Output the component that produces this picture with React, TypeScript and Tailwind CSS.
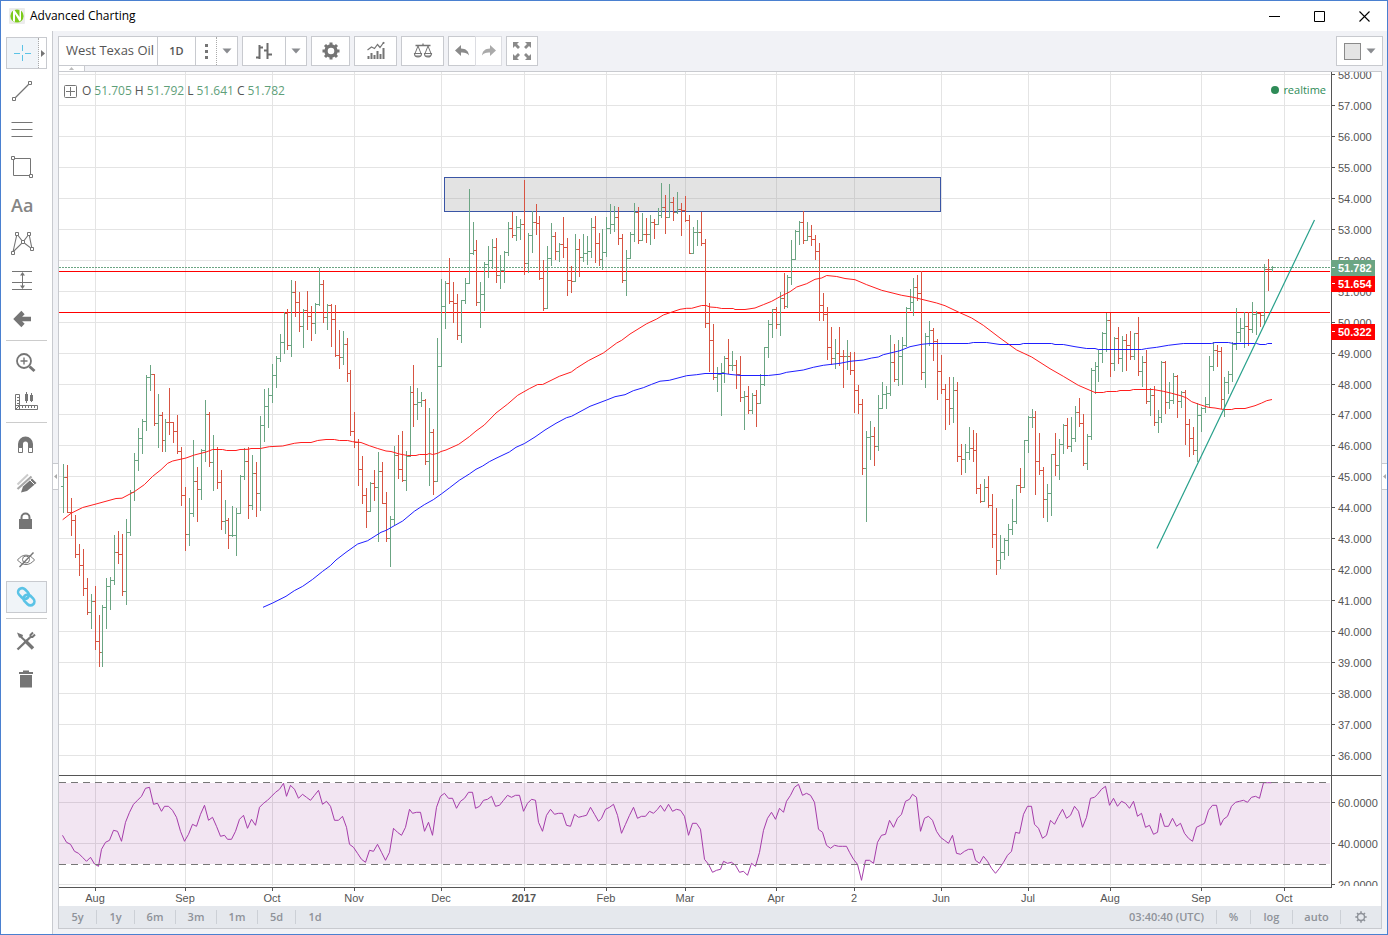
import type { ReactNode } from "react";

/* ---------- chart data ---------- */

// Each block holds "high,low,close" triples in thirds of a pixel below `top`.
const BLOCKS: { top: number; rows: string }[] = [
  {
    top: 340,
    rows: "372,518,412 376,517,517 475,587,541 526,653,643 613,707,676 628,767,745 715,824,817 763,866,784 739,929,904 826,980,937 796,980,802 715,866,739 712,808,721 586,734,637 574,671,643 583,767,754 538,794,577 451,587,457 340,482,361 265,392,295 238,341,244 106,272,112 76,152,103 103,257,250 163,323,226 217,335,301 238,335,247 145,284,248 247,308,274 226,341,334 322,497,466 442,632,583 475,617,520 301,530,424 382,545,448 328,479,331 181,365,223 217,380,367 286,452,328 322,446,427 391,569,544 481,581,541 535,626,587 499,590,586 505,647,520 406,520,409 325,419,364 322,536,496 346,509,400 367,530,460 229,512,256 148,305,199 145,263,166 73,188,106 49,143,55",
  },
  {
    top: 240,
    rows: "283,365,307 217,341,220 208,329,316 121,350,157 124,230,187 157,275,259 208,323,211 154,269,229 199,302,250 190,281,193 85,197,133 121,248,232 193,269,196 193,320,238 196,350,346 271,386,352 274,374,313 295,425,400 391,587,574 517,623,607 598,737,688 649,791,766 745,863,814 727,814,730 691,782,742 637,905,694 667,790,790 757,905,895 829,980,838 619,856,646 586,716,688 574,725,721 634,752,649 439,649,457 376,560,493 445,539,487 457,500,481 478,674,664 505,737,577 568,764,724 295,724,379 118,380,199 124,266,130 55,191,184 127,248,190 163,299,286 181,308,181 115,191,130",
  },
  {
    top: 160,
    rows: "88,370,280 187,284,271 241,437,427 367,503,403 307,452,313 259,353,301 238,326,262 235,368,346 286,386,331 274,368,277 187,287,205 157,233,226 169,242,202 178,239,193 61,344,310 220,338,226 154,278,187 133,224,190 169,359,355 301,452,445 259,445,295 190,317,229 217,299,274 250,305,253 172,293,262 235,407,361 319,398,364 223,364,268 238,350,292 223,305,280 229,314,274 175,293,202 169,308,250 220,317,298 208,329,277 172,290,205 133,221,193 139,215,172 142,254,235 223,368,361 271,407,295 217,296,223 130,245,157 142,251,241 160,242,223 175,248,224 166,254,187 178,236,193 145,194,166 70,173,142 106,221,172 73,173,127 112,182,157 97,161,148 130,227,151 109,185,181 166,280,280 202,281,218 181,257,217 157,257,250",
  },
  {
    top: 200,
    rows: "118,383,370 310,515,421 373,539,532 502,575,523 490,647,517 469,548,475 418,521,497 454,512,496 481,566,523 469,605,592 574,689,589 559,641,631 580,641,586 571,680,610 523,610,553 442,557,442 361,473,373 328,413,328 322,386,373 277,407,295 220,326,319 226,322,232 121,254,178 91,179,94 64,134,67 34,131,121 67,122,109 76,137,118 106,179,154 130,362,316 280,362,343 322,479,442 382,494,475 418,506,460 382,497,469 451,563,470 421,509,469 457,524,511 457,638,571 556,641,613 598,824,805 694,965,712 664,779,709 682,797,739 586,752,625 547,626,583 559,626,580 406,587,487 433,545,538 421,557,469 412,554,436 322,440,325 268,332,307 235,347,262 226,302,280 214,539,517 400,563,409 364,437,391 385,482,424 418,599,514 466,581,568 553,689,598 532,674,625 532,668,571 547,785,769 733,824,778 733,818,757 682,779,745 691,785,751 700,881,865 853,908,904 838,904,862 829,923,916 883,1043,1003 925,1124,1081 1006,1106,1057 1015,1079,1021 973,1067,988 898,1004,964 856,971,856 805,878,862",
  },
  {
    top: 240,
    rows: "601,742,601 529,638,533 508,563,532 514,764,664 580,704,691 682,833,778 733,845,760 643,827,643 580,707,676 598,719,613 553,641,556 535,626,619 532,635,595 499,605,517 475,560,550 523,677,670 583,689,589 385,599,391 367,461,379 331,425,340 277,368,280 220,335,241 220,410,370 292,392,295 262,371,355 289,395,301 283,392,316 274,359,349 280,358,280 232,407,394 349,440,367 331,490,484 445,527,466 439,557,547 511,578,532 364,548,367 364,521,487 427,506,481 400,491,409 406,533,484 454,503,457 451,614,553 538,650,595 562,644,631 490,665,526 502,575,505 472,518,493 349,502,379 307,392,331 316,380,334 322,506,478 412,530,427 394,461,403 307,425,313 205,329,277 235,305,265 217,323,259 217,317,268 187,278,223 214,284,220 220,260,226 73,250,88 58,152,89 79,94,82",
  },
];

const RSI =
  "226 247 253 274 280 292 304 292 312 319 268 247 241 211 214 244 187 157 133 121 109 85 82 133 130 154 139 139 151 172 214 244 223 193 199 163 136 181 172 199 229 226 238 238 214 178 166 205 178 196 142 130 121 109 97 88 70 109 76 88 115 103 112 121 106 91 133 124 139 181 181 169 202 253 262 280 298 307 271 274 253 277 301 277 205 217 226 202 148 160 157 157 214 187 226 142 109 100 115 115 145 124 115 97 97 145 139 121 118 109 139 136 121 106 112 106 106 154 130 118 121 187 214 166 148 163 160 160 196 199 163 172 169 166 142 163 184 175 148 142 133 166 220 193 166 142 175 169 169 154 160 148 136 154 133 154 148 151 169 226 190 190 208 298 313 337 331 328 304 310 307 316 337 334 346 310 319 277 211 175 157 178 145 157 124 106 82 73 106 100 106 127 208 217 256 265 256 259 259 259 277 298 313 361 301 301 310 247 226 223 181 202 175 163 124 118 103 112 214 175 169 181 214 232 241 250 226 280 283 274 268 268 301 310 289 304 325 340 325 307 286 274 217 220 163 139 139 193 205 235 226 181 193 169 148 175 166 139 154 202 172 115 112 103 88 79 136 115 139 124 130 145 124 169 160 202 196 223 217 160 199 199 175 199 190 220 235 244 202 196 190 151 136 136 196 178 169 139 127 124 121 127 112 109 115 68 68 68";

const SLOW_MA =
  "263,607.3 272.7,603 286,596.3 294.3,590.7 302.7,586.3 312.7,579.3 322.7,571.3 330.3,565.7 336,560 346,552.3 357.7,544 367.7,540.7 381,532.3 386.3,530.3 394.3,525.7 402.7,521 414.3,511.3 424.3,504.7 433.3,499.7 441.3,494 449.3,488 459.3,480.3 469.3,474 476,469.3 482.7,466 489.3,461.7 496,458.3 509.3,452 516,447.3 524.5,443.5 535,437 545,430 556,423.3 566.5,417.7 571.5,416.3 590,406.3 606.7,400 615,396.7 625,394.7 633.3,390.7 643.3,387.7 651.7,384.3 660,381.2 669.3,380.3 686.7,375.7 696.7,374.7 705,373.5 724,373.5 731,374.5 741,375.5 768.3,375.5 780,374.2 786.7,372.3 803.3,370 813.3,367.3 823.3,365.3 840,363.3 850,361.3 863.3,360 871.7,358 878.3,357 883.3,354.7 900,350.7 910,346.7 921.7,344.3 930,343.5 950,343.5 968.3,343.5 973.3,342.5 986.7,342.5 1000,344.5 1020,344.5 1023.3,343.5 1051.7,343.5 1055,344.5 1063.3,344.5 1075,346.7 1086.7,348.5 1095,348.5 1098.3,349.5 1141.7,349.5 1146.7,348.5 1156.7,347.3 1168.3,345.3 1183.3,343.5 1211.7,343.5 1215,342.5 1228.3,342.5 1233.3,343.5 1256.7,343.5 1260,344.5 1265.7,344.5 1267.7,343.5 1272,343.5";

const FAST_MA =
  "62.7,519.7 71,513.3 82.7,507.5 96,504 116,498.5 122,498.2 134.3,491.7 144.3,484.7 152.7,476.3 161,469.7 167.7,463.3 172.7,461 186,458 194.3,455 206,452 212.7,449.5 222.7,449.5 226.7,450.5 236,450.5 240,449.5 248.3,449.3 251,448.5 260.3,448.5 269.3,446.7 282.7,446 294.3,443.3 301,442.5 311,442.5 317.7,440.5 326,439.5 334.3,439.5 339.3,440.5 347.7,440.5 352.7,441.7 361,442.5 369.3,445.7 377.7,448.5 386,451 391,451.5 399.3,454 407.7,455.5 416,455.5 419.3,454.5 427,454.5 429.3,453.5 432.7,454.5 437.7,453.3 441,451.5 446,450 458.7,444.3 469.3,436.7 476,431 484.3,425 496,413 507.7,404 517.7,395.3 529.3,388.7 537.7,384.5 542.7,384.5 559.3,376.3 571.3,372 576.7,368 588.3,360.7 603.3,353 616.7,343 621.7,340.3 630,334 646.7,323.7 656.7,319 663.3,315 670,312.7 680,309.3 686.7,308.3 691.7,308.3 701.7,305.5 706,305.5 710,307 716.7,307.5 721.7,308.5 733.3,308.5 735,309.5 745,309.5 755,308 763.3,304.7 771.7,301.3 780,296.7 790,291.7 796.7,287 806.7,283.7 815,279.3 821.7,278 826.7,275.5 836.7,276.5 845,278.5 855,279.7 866.7,284.7 881.7,290.3 901.7,295.3 913.3,297.3 921.7,299.3 936.7,303 945,305.7 958.3,312 971.7,318 983.3,325.3 1000,338 1016.7,350 1031.7,357 1050,368.7 1063.3,376.3 1078.3,385.3 1095,392.5 1103.3,392.5 1106.7,391.5 1116.7,391.5 1120,390.5 1130,390.5 1133.3,389.5 1153.3,389.5 1163.3,391.3 1171.7,393.3 1181.7,396 1186.7,398 1191.7,401.7 1200,404.7 1208.3,407.3 1215,408 1223.3,409.5 1231.7,409.5 1235,408.5 1245,408.5 1255,405.7 1261.7,403 1266.7,400.7 1272,399.5";

const MONTHS: [number, string][] = [
  [95, "Aug"],
  [185, "Sep"],
  [272, "Oct"],
  [354, "Nov"],
  [441, "Dec"],
  [524, "2017"],
  [606, "Feb"],
  [685, "Mar"],
  [776, "Apr"],
  [854, "2"],
  [941, "Jun"],
  [1028, "Jul"],
  [1110, "Aug"],
  [1201, "Sep"],
  [1284, "Oct"],
];

const PRICES = Array.from({ length: 23 }, (_, i) => ({
  label: `${58 - i}.000`,
  y: i < 11 ? 74 + i * 31 : 414 + (i - 11) * 31,
}));

const barX = (i: number) => 63 + Math.floor(0.6 + i * 3.9368);

function buildBars() {
  let up = "";
  let down = "";
  let open = 340 + 439 / 3;
  let i = 0;
  for (const block of BLOCKS) {
    for (const row of block.rows.split(" ")) {
      const [high, low, close] = row.split(",").map((v) => block.top + Number(v) / 3);
      const x = barX(i);
      const top = Math.floor(high);
      const height = Math.floor(low) + 1 - top;
      const d =
        `M${x} ${top}h1v${height}h-1z` +
        `M${x - 2} ${Math.floor(open)}h2v1h-2z` +
        `M${x + 1} ${Math.floor(close)}h1v1h-1z`;
      if (close < open) up += d;
      else down += d;
      open = close;
      i += 1;
    }
  }
  return { up, down };
}

const BARS = buildBars();
const RSI_POINTS = RSI.split(" ")
  .map((v, i) => `${barX(i) - 0.5},${(760 + Number(v) / 3).toFixed(1)}`)
  .join(" ");

/* ---------- chart ---------- */

function PriceTag({ y, label, color }: { y: number; label: string; color: string }) {
  return (
    <g>
      <rect x="1331" y={y} width="44" height="16" fill={color} />
      <rect x="1332" y={y + 7} width="3" height="1" fill="#fff" />
      <text x="1338" y={y + 12} fill="#fff" fontWeight="700">
        {label}
      </text>
    </g>
  );
}

function Chart() {
  return (
    <svg
      viewBox="59 72 1322 834"
      className="block w-full bg-white font-['Liberation_Sans',Arial,sans-serif] text-[11px]"
      role="img"
      aria-label="West Texas Oil daily price chart"
    >
      <defs>
        <clipPath id="rsi-axis">
          <rect x="1331" y="776" width="50" height="110" />
        </clipPath>
      </defs>
      <g fill="#e4e4e4" shapeRendering="crispEdges">
        {PRICES.map((p) => (
          <rect key={p.y} x="59" y={p.y} width="1271" height="1" />
        ))}
        {[802, 843, 884].map((y) => (
          <rect key={y} x="59" y={y} width="1271" height="1" />
        ))}
        {MONTHS.map(([x]) => (
          <rect key={x} x={x} y="72" width="1" height="814" />
        ))}
      </g>
      <g shapeRendering="crispEdges">
        <rect x="59" y="783" width="1271" height="81" fill="#800080" fillOpacity="0.1" />
        <rect x="444.5" y="177.5" width="496" height="34" fill="#999" fillOpacity="0.27" stroke="#3a55a5" />
        <path d="M59 271.5H1330M59 312.5H1330" stroke="#f00" />
        <path d="M59 267.5H1330" stroke="#6ba583" strokeDasharray="2 1" />
        <path d={BARS.up} fill="#6ba583" />
        <path d={BARS.down} fill="#d75442" />
      </g>
      <g fill="none" strokeWidth="1">
        <polyline points={FAST_MA} stroke="#ff1f1f" />
        <polyline points={SLOW_MA} stroke="#1f1fff" />
        <path d="M1157 548.5L1314.5 220" stroke="#26a08a" strokeWidth="1.2" />
        <polyline points={RSI_POINTS} stroke="#a53caa" />
      </g>
      <path
        d="M59 782.5H1330M59 864.5H1330"
        stroke="#777"
        strokeDasharray="7 5"
        shapeRendering="crispEdges"
      />
      <g fill="#555" shapeRendering="crispEdges">
        <rect x="59" y="775" width="1322" height="1" />
        <rect x="59" y="887" width="1273" height="1" />
        <rect x="1331" y="72" width="1" height="816" />
        {PRICES.map((p) => (
          <rect key={p.y} x="1332" y={p.y} width="3" height="1" />
        ))}
        {[802, 843, 884].map((y) => (
          <rect key={y} x="1332" y={y} width="3" height="1" />
        ))}
        {MONTHS.map(([x]) => (
          <rect key={x} x={x} y="888" width="1" height="3" />
        ))}
      </g>
      <g fill="#555">
        {PRICES.map((p) => (
          <text key={p.y} x="1338" y={p.y + 5}>
            {p.label}
          </text>
        ))}
        <g clipPath="url(#rsi-axis)">
          <text x="1338" y="807">60.0000</text>
          <text x="1338" y="848">40.0000</text>
          <text x="1338" y="889">20.0000</text>
        </g>
        {MONTHS.map(([x, label]) => (
          <text key={x} x={x} y="902" textAnchor="middle" fontWeight={label === "2017" ? 700 : 400}>
            {label}
          </text>
        ))}
      </g>
      <PriceTag y={260} label="51.782" color="#6ba583" />
      <PriceTag y={276} label="51.654" color="#ff0000" />
      <PriceTag y={324} label="50.322" color="#ff0000" />
    </svg>
  );
}

/* ---------- icons ---------- */

function Icon({ size = 28, className = "", children }: { size?: number; className?: string; children: ReactNode }) {
  return (
    <svg
      width={size}
      height={size}
      viewBox={`0 0 ${size} ${size}`}
      className={`block shrink-0 ${className}`}
      fill="none"
      stroke="#757575"
      aria-hidden="true"
    >
      {children}
    </svg>
  );
}

const Caret = () => (
  <svg width="10" height="6" viewBox="0 0 10 6" className="block" aria-hidden="true">
    <path d="M0.5 0.5h9L5 5.5z" fill="#8a8c90" />
  </svg>
);

const CrossIcon = () => (
  <Icon>
    <path d="M13.5 6v6M13.5 16v6M5 14.5h6M16 14.5h6" stroke="#5bc3e6" />
  </Icon>
);
const TrendIcon = () => (
  <Icon>
    <path d="M7 21L21 7" strokeWidth="1.2" />
    <path d="M4.5 20.5h3v3h-3zM20.5 4.5h3v3h-3z" fill="#fff" />
  </Icon>
);
const LinesIcon = () => (
  <Icon>
    <path d="M3.5 7.5h21M3.5 14.5h21M3.5 21.5h21" />
  </Icon>
);
const RectIcon = () => (
  <Icon>
    <path d="M5.5 5.5h17v17h-17z" />
    <path d="M3.5 3.5h3v3h-3zM21.5 21.5h3v3h-3z" fill="#fff" />
  </Icon>
);
const PatternIcon = () => (
  <Icon>
    <path d="M5 23L9 5l6 8 6-8 3 15-9-7z" strokeWidth="1.1" />
    <path d="M3.5 22.5h3v3h-3zM7.5 3.5h3v3h-3zM13.5 11.5h3v3h-3zM19.5 3.5h3v3h-3zM22.5 18.5h3v3h-3z" fill="#fff" />
  </Icon>
);
const RangeIcon = () => (
  <Icon>
    <path d="M4 4.5h20M4 15.5h20M4 22.500h20M14.500 6v15" />
    <path d="M14.500 5l2.500 3.500h-5zM14.500 22l2.500-3.500h-5z" fill="#757575" stroke="none" />
  </Icon>
);
const BackIcon = () => (
  <Icon>
    <path d="M15 7.500L8.500 14l6.500 6.500M9.500 14H23" strokeWidth="4.600" />
  </Icon>
);
const ZoomIcon = () => (
  <Icon>
    <circle cx="12" cy="12" r="7" strokeWidth="1.800" />
    <path d="M12 8.500v7M8.500 12h7" strokeWidth="1.400" />
    <path d="M17.500 17.500l5 4.500" strokeWidth="3" />
  </Icon>
);
const MeasureIcon = () => (
  <Icon>
    <path d="M3.500 7.500h4v15h-4zM3.500 18.500h22v4h-22zM3.500 22.500l4-4" />
    <path d="M5 10.500h2M5 13.500h2M5 16.500h2M10.500 19v2M13.500 19v2M16.500 19v2M19.500 19v2M22.500 19v2M14.500 5v11M19.500 6v9" />
    <path d="M13 7h3v7h-3zM18 8h3v6h-3z" fill="#757575" stroke="none" />
  </Icon>
);
const MagnetIcon = () => (
  <Icon>
    <path d="M8.500 17v-4a5 5 0 0 1 10 0v4" strokeWidth="5" />
    <path d="M6.500 16.500h4v5h-4zM16.500 16.500h4v5h-4z" fill="#fff" />
  </Icon>
);
const PencilsIcon = () => (
  <Icon>
    <path d="M5.500 15.500L16 5.500" stroke="#ccc" strokeWidth="2" />
    <path d="M5.500 20L19.500 7.500" stroke="#a8a8a8" strokeWidth="2.200" />
    <path d="M9 23.500l2-6 9-8 4.500 4.500-9.500 8z" fill="#757575" stroke="none" />
    <path d="M18 11l4.500 4.500" stroke="#fff" />
  </Icon>
);
const LockIcon = () => (
  <Icon>
    <path d="M9.500 13v-2.500a4 4 0 0 1 8 0V13" strokeWidth="2" />
    <path d="M7 12h13v10H7z" fill="#757575" stroke="none" />
  </Icon>
);
const EyeIcon = () => (
  <Icon>
    <path d="M5.500 15c5-6.500 12-6.500 17 0-5 6-12 6-17 0z" />
    <circle cx="14" cy="14.500" r="3.500" />
    <path d="M21.500 7.500L7.500 22" strokeWidth="1.400" />
  </Icon>
);
const LinkIcon = () => (
  <Icon>
    <g stroke="#5bc3e6" strokeWidth="2.600">
      <rect x="-4" y="-6" width="8" height="12" rx="4" transform="translate(10.500 10.500) rotate(-45)" />
      <rect x="-4" y="-6" width="8" height="12" rx="4" transform="translate(16 17) rotate(-45)" />
    </g>
  </Icon>
);
const ToolsIcon = () => (
  <Icon>
    <path d="M5.500 22.500L18 10.500" strokeWidth="2.400" />
    <path d="M21 5.500l-2.500 2.500v2h2l2.500-2.500" strokeWidth="2" />
    <path d="M9 10l4.500 4" strokeWidth="2" />
    <path d="M13 13.500l8 8" strokeWidth="3.400" />
    <path d="M5 5.500l6 2.500-1 3-3-.5z" fill="#757575" stroke="none" />
  </Icon>
);
const TrashIcon = () => (
  <Icon>
    <path d="M8 10h12v12.500H8zM7 7h4V5.500h6V7h4v2H7z" fill="#757575" stroke="none" />
  </Icon>
);

const BarsIcon = () => (
  <Icon size={20}>
    <path d="M5.500 4v14M2 16.500h3M6 6.500h3M13.500 2v16M10 9.500h3M14 13.500h4" strokeWidth="2" stroke="#6c6c6c" />
  </Icon>
);
const GearIcon = () => (
  <Icon size={20}>
    <circle cx="10" cy="10" r="5" strokeWidth="3.400" />
    <path
      d="M10 1.500v3M10 15.500v3M1.500 10h3M15.500 10h3M4 4l2 2M14 14l2 2M16 4l-2 2M4 16l2-2"
      strokeWidth="3"
    />
  </Icon>
);
const IndicatorIcon = () => (
  <Icon size={20}>
    <path d="M1.500 9l4-3 3 1.500 3-4 2.500 3 4-5.500" strokeWidth="1.200" />
    <path d="M2.500 18v-3M5.500 18v-6M8.500 18v-4M11.500 18v-8M14.500 18v-5M17.500 18V7" strokeWidth="2" />
    <circle cx="17.500" cy="2" r="1" fill="#757575" stroke="none" />
  </Icon>
);
const ScalesIcon = () => (
  <Icon size={20}>
    <path d="M2.500 4.500h15M10 2.500v2" strokeWidth="1.300" />
    <path d="M5 5L2 12.500M5 5l3 7.500M15 5l-3 7.500M15 5l3 7.500" />
    <path d="M1.500 12.500h7a3.500 3.500 0 0 1-7 0zM11.500 12.500h7a3.500 3.500 0 0 1-7 0z" strokeWidth="1.200" />
    <path d="M2.500 14.500h5l-1 1.200h-3zM12.500 14.500h5l-1 1.200h-3z" fill="#757575" stroke="none" />
  </Icon>
);
const UndoIcon = ({ color }: { color: string }) => (
  <svg width="14" height="12" viewBox="0 0 14 12" aria-hidden="true">
    <path d="M0 5.500L6 0v3.500c5 .2 7.500 2.500 8 7-2-2.500-4-3.200-8-3V11z" fill={color} />
  </svg>
);
const ExpandIcon = () => (
  <Icon size={20}>
    <path
      d="M1 1h6L5 3l3 3-2 2-3-3-2 2zM19 1h-6l2 2-3 3 2 2 3-3 2 2zM1 19h6l-2-2 3-3-2-2-3 3-2-2zM19 19h-6l2-2-3-3 2-2 3 3 2-2z"
      fill="#8a8a8a"
      stroke="none"
    />
  </Icon>
);

/* ---------- sidebar ---------- */

function Tool({ label, shift = false, children }: { label: string; shift?: boolean; children: ReactNode }) {
  return (
    <button
      type="button"
      aria-label={label}
      className={`flex h-[38px] w-full items-center ${shift ? "pl-[11px]" : "pl-[7px]"}`}
    >
      {children}
    </button>
  );
}

const Divider = () => <div className="mt-[2px] mr-[5px] mb-[3px] ml-[5px] h-px bg-[#ccc]" />;

function Sidebar() {
  return (
    <nav aria-label="Drawing tools" className="w-[52px] shrink-0 border-r border-[#c8cacf] bg-white pt-[3px]">
      <div className="flex h-[38px] items-center pl-[5px]">
        <div className="flex h-8 w-[41px] border border-[#c8cacf]">
          <button
            type="button"
            aria-label="Cross"
            className="flex w-8 shrink-0 items-center justify-center border-r border-dotted border-[#aaa] bg-[#f0f4f8]"
          >
            <CrossIcon />
          </button>
          <button type="button" aria-label="Cursor menu" className="flex flex-1 items-center justify-center">
            <svg width="4" height="7" viewBox="0 0 4 7" aria-hidden="true">
              <path d="M0 0l4 3.500L0 7z" fill="#757575" />
            </svg>
          </button>
        </div>
      </div>
      <Tool label="Trend line"><TrendIcon /></Tool>
      <Tool label="Channels"><LinesIcon /></Tool>
      <Tool label="Shapes"><RectIcon /></Tool>
      <button
        type="button"
        className="flex h-[38px] w-full items-center pl-[10px] font-['Open_Sans',sans-serif] text-[18px] font-semibold text-[#858585]"
      >
        Aa
      </button>
      <Tool label="Patterns"><PatternIcon /></Tool>
      <Tool label="Range"><RangeIcon /></Tool>
      <Tool label="Back"><BackIcon /></Tool>
      <Divider />
      <Tool label="Zoom in" shift><ZoomIcon /></Tool>
      <Tool label="Measure" shift><MeasureIcon /></Tool>
      <Divider />
      <Tool label="Magnet" shift><MagnetIcon /></Tool>
      <Tool label="Drawing mode" shift><PencilsIcon /></Tool>
      <Tool label="Lock drawings" shift><LockIcon /></Tool>
      <Tool label="Hide drawings" shift><EyeIcon /></Tool>
      <div className="flex h-[38px] items-center pl-[5px]">
        <button
          type="button"
          aria-label="Link"
          className="flex h-8 w-[41px] items-center justify-center border border-[#c8cacf] bg-[#f0f4f8]"
        >
          <LinkIcon />
        </button>
      </div>
      <Divider />
      <Tool label="Tools" shift><ToolsIcon /></Tool>
      <Tool label="Remove" shift><TrashIcon /></Tool>
    </nav>
  );
}

/* ---------- toolbar ---------- */

function ToolBox({ className, label, children }: { className: string; label: string; children: ReactNode }) {
  return (
    <button
      type="button"
      aria-label={label}
      className={`flex items-center justify-center border border-[#c8cacf] bg-white ${className}`}
    >
      {children}
    </button>
  );
}

function Toolbar() {
  return (
    <div className="flex h-[30px] gap-1 text-[#555]">
      <div className="flex w-[180px] border border-[#c8cacf] bg-white">
        <button type="button" className="w-[99px] border-r border-[#c8cacf] pl-1 text-[13px] font-medium whitespace-nowrap">
          West Texas Oil
        </button>
        <button type="button" className="w-[38px] border-r border-[#c8cacf] text-[11px] font-semibold">
          1D
        </button>
        <button
          type="button"
          aria-label="Intervals"
          className="flex w-[21px] flex-col items-center justify-center gap-[3px] border-r border-dotted border-[#aaa]"
        >
          <span className="size-[3px] bg-[#757575]" />
          <span className="size-[3px] bg-[#757575]" />
          <span className="size-[3px] bg-[#757575]" />
        </button>
        <button type="button" aria-label="Interval menu" className="flex flex-1 items-center justify-center">
          <Caret />
        </button>
      </div>
      <div className="flex w-[65px] border border-[#c8cacf] bg-white">
        <button type="button" aria-label="Bars" className="flex w-[43px] items-center justify-center border-r border-[#c8cacf]">
          <BarsIcon />
        </button>
        <button type="button" aria-label="Chart style menu" className="flex flex-1 items-center justify-center">
          <Caret />
        </button>
      </div>
      <ToolBox label="Settings" className="w-[39px]"><GearIcon /></ToolBox>
      <ToolBox label="Indicators" className="w-[43px]"><IndicatorIcon /></ToolBox>
      <ToolBox label="Compare" className="w-[43px]"><ScalesIcon /></ToolBox>
      <div className="flex">
        <ToolBox label="Undo" className="w-[27px] border-r-0"><UndoIcon color="#8a8a8a" /></ToolBox>
        <button
          type="button"
          aria-label="Redo"
          className="flex w-[27px] items-center justify-center border border-[#dcdde2] bg-white"
        >
          <span className="-scale-x-100"><UndoIcon color="#aaa" /></span>
        </button>
      </div>
      <ToolBox label="Full screen" className="w-[32px]"><ExpandIcon /></ToolBox>
      <button
        type="button"
        aria-label="Layout"
        className="-mr-px ml-auto flex w-[47px] items-center justify-center gap-[5px] border border-[#c8cacf] bg-white"
      >
        <span className="size-[17px] border border-[#8a8a8a] bg-[#e4e4e4]" />
        <Caret />
      </button>
    </div>
  );
}

/* ---------- status bar ---------- */

const RANGES = [
  { label: "5y", width: "w-[38px]" },
  { label: "1y", width: "w-[38px]" },
  { label: "6m", width: "w-[41px]" },
  { label: "3m", width: "w-[41px]" },
  { label: "1m", width: "w-[41px]" },
  { label: "5d", width: "w-[38px]" },
  { label: "1d", width: "w-[38px]" },
];

const Separator = () => <span className="h-[14px] w-px bg-[#ccd0d6]" />;

function StatusBar() {
  return (
    <div className="flex h-[22px] items-center bg-[#e5e8ed] text-[11px] font-semibold text-[#8e9299]">
      {RANGES.map((r, i) => (
        <div key={r.label} className={`flex items-center ${r.width}`}>
          <button type="button" className="flex-1">{r.label}</button>
          {i < RANGES.length - 1 && <Separator />}
        </div>
      ))}
      <div className="ml-auto flex items-center">
        <span className="px-3">03:40:40 (UTC)</span>
        <Separator />
        <button type="button" className="w-[33px]">%</button>
        <Separator />
        <button type="button" className="w-[41px]">log</button>
        <Separator />
        <button type="button" className="w-[47px]">auto</button>
        <Separator />
        <button type="button" aria-label="Chart properties" className="flex w-[40px] justify-center">
          <Icon size={12}>
            <circle cx="6" cy="6" r="3.500" stroke="#8e9299" strokeWidth="1.400" />
            <path
              d="M6 .3v2M6 9.700v2M.3 6h2M9.700 6h2M2 2l1.400 1.400M8.600 8.600L10 10M10 2L8.600 3.400M2 10l1.400-1.400"
              stroke="#8e9299"
              strokeWidth="1.500"
            />
          </Icon>
        </button>
      </div>
    </div>
  );
}

/* ---------- window ---------- */

function TitleBar() {
  return (
    <header className="flex h-[30px] items-center bg-white pl-2 text-[12px] text-black">
      <svg width="16" height="16" viewBox="0 0 16 16" aria-hidden="true">
        <rect width="16" height="16" rx="1" fill="#ececec" />
        <circle cx="8" cy="8" r="6.600" fill="#7ccb1b" />
        <path d="M4 2.500l1.500-.5 5 7V2h1.500v10l-1.500 1.500-4.500-7.500v8L4 13z" fill="#fff" />
      </svg>
      <h1 className="pl-[5px]">Advanced Charting</h1>
      <div className="ml-auto flex">
        <button type="button" aria-label="Minimize" className="flex w-[45px] justify-center">
          <svg width="11" height="11" viewBox="0 0 11 11"><path d="M0 5.500h11" stroke="#000" /></svg>
        </button>
        <button type="button" aria-label="Maximize" className="flex w-[45px] justify-center">
          <svg width="11" height="11" viewBox="0 0 11 11"><path d="M.5.5h10v10H.5z" fill="none" stroke="#000" /></svg>
        </button>
        <button type="button" aria-label="Close" className="flex w-[45px] justify-center">
          <svg width="11" height="11" viewBox="0 0 11 11"><path d="M.5.5l10 10M10.500.5l-10 10" stroke="#000" strokeWidth="1.100" /></svg>
        </button>
      </div>
    </header>
  );
}

const LEGEND: [string, string][] = [
  ["O", "51.705"],
  ["H", "51.792"],
  ["L", "51.641"],
  ["C", "51.782"],
];

export default function App() {
  return (
    <div className="flex min-h-screen flex-col border border-[#4a80d0] bg-[#f1f2f6] font-['Open_Sans','Noto_Sans',sans-serif]">
      <TitleBar />
      <div className="flex flex-1">
        <Sidebar />
        <main className="relative min-w-0 flex-1 px-[5px] py-[5px]">
          <Toolbar />
          <button
            type="button"
            aria-label="Collapse toolbar"
            className="flex h-[5px] w-[27px] items-center justify-center border-x border-[#c8cacf] bg-white"
          >
            <svg width="5" height="3" viewBox="0 0 5 3" aria-hidden="true"><path d="M0 3L2.500 0 5 3z" fill="#bbb" /></svg>
          </button>
          <section className="relative border border-[#c8cacf]">
            <Chart />
            <div className="absolute top-[11px] left-[5px] flex items-center gap-[3px] text-[12px] leading-4 text-[#555]">
              <button type="button" aria-label="Expand legend" className="mr-[2px]">
                <svg width="13" height="13" viewBox="0 0 13 13" className="block" fill="none" stroke="#757575" aria-hidden="true">
                  <rect x=".5" y=".5" width="12" height="12" rx="1" />
                  <path d="M6.500 2v9M2 6.500h9" />
                </svg>
              </button>
              {LEGEND.map(([name, value]) => (
                <span key={name} className="flex gap-[3px]">
                  <span>{name}</span>
                  <span className="text-[#5f9f7a]">{value}</span>
                </span>
              ))}
            </div>
            <div className="absolute top-[10px] right-[55px] flex items-center gap-1 text-[11px] leading-4 text-[#2e8b57]">
              <span className="size-2 rounded-full bg-[#2e8b57]" />
              realtime
            </div>
            <StatusBar />
          </section>
          <button
            type="button"
            aria-label="Collapse drawing tools"
            className="absolute top-[432px] left-0 flex h-[27px] w-[5px] items-center justify-center border-y border-[#c8cacf] bg-white"
          >
            <svg width="3" height="5" viewBox="0 0 3 5" aria-hidden="true"><path d="M3 0L0 2.500 3 5z" fill="#aaa" /></svg>
          </button>
          <button
            type="button"
            aria-label="Open side panel"
            className="absolute top-[432px] right-0 flex h-[27px] w-[5px] items-center justify-center border-y border-[#c8cacf] bg-white"
          >
            <svg width="3" height="5" viewBox="0 0 3 5" aria-hidden="true"><path d="M3 0L0 2.500 3 5z" fill="#aaa" /></svg>
          </button>
        </main>
      </div>
    </div>
  );
}
